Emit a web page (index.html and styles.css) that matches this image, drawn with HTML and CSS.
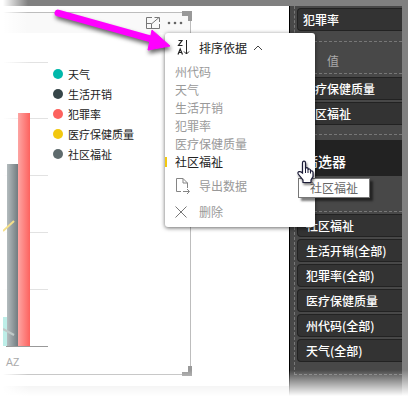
FILE: index.html
```html
<!DOCTYPE html>
<html lang="zh-CN">
<head>
<meta charset="utf-8">
<title>排序依据</title>
<link rel="stylesheet" href="styles.css">
</head>
<body>
<div class="frame">
  <main class="report">
    <section class="visual">
      <header class="visual-bar">
        <button class="icon-button" aria-label="焦点模式">
          <svg width="16" height="14" viewBox="0 0 16 14" fill="none" stroke="#777"><path d="M7 1.500H1.500v11h13V8M1.500 7.500h5v5M7 7.500l7-6M9.500 1.500h5V6"/></svg>
        </button>
        <button class="icon-button" aria-label="更多选项">
          <svg width="16" height="14" viewBox="0 0 16 14" fill="#666"><circle cx="2" cy="7" r="1.300"/><circle cx="8" cy="7" r="1.300"/><circle cx="14" cy="7" r="1.300"/></svg>
        </button>
      </header>
      <div class="visual-body">
        <svg class="plot" width="45" height="338" viewBox="0 0 45 338">
          <defs>
            <linearGradient id="gray"><stop stop-color="#b4bcbe"/><stop offset="1" stop-color="#727c80"/></linearGradient>
            <linearGradient id="red"><stop stop-color="#fda5a3"/><stop offset="1" stop-color="#fd625e"/></linearGradient>
            <linearGradient id="grid" gradientUnits="userSpaceOnUse" x1="0" y1="0" x2="28" y2="0"><stop stop-color="#fff"/><stop offset="1" stop-color="#e2e2e2"/></linearGradient>
          </defs>
          <path d="M0 29.500h45M0 85.500h45M0 142.500h45M0 199.500h45M0 256.500h45" stroke="url(#grid)"/>
          <path d="M0 284h4v29H0z" fill="#bdeee8"/>
          <path d="M4 131h11v182H4z" fill="url(#gray)"/>
          <path d="M15 80h12v233H15z" fill="url(#red)"/>
          <path d="M0 198l11-10" stroke="#f5e08a" stroke-width="2"/>
          <path d="M0 296l11 6" stroke="#bfc9c8" stroke-width="2"/>
          <path d="M3 313.500h42" stroke="#999"/>
          <text x="3" y="333" class="axis">AZ</text>
        </svg>
        <ul class="legend">
          <li><span class="dot teal"></span>天气</li>
          <li><span class="dot slate"></span>生活开销</li>
          <li><span class="dot coral"></span>犯罪率</li>
          <li><span class="dot gold"></span>医疗保健质量</li>
          <li><span class="dot steel"></span>社区福祉</li>
        </ul>
      </div>
      <span class="corner top"></span>
      <span class="corner bottom"></span>
    </section>
    <div class="tabs"></div>
  </main>
  <aside class="fields">
    <div class="well first"><button class="pill">犯罪率</button></div>
    <div class="well">
      <h3>值</h3>
      <div class="slots"><button class="pill">医疗保健质量</button><button class="pill">社区福祉</button></div>
    </div>
    <h2>筛选器</h2>
    <div class="band"></div>
    <div class="well filters">
      <button class="pill">社区福祉</button>
      <button class="pill">生活开销(全部)</button>
      <button class="pill">犯罪率(全部)</button>
      <button class="pill">医疗保健质量</button>
      <button class="pill">州代码(全部)</button>
      <button class="pill">天气(全部)</button>
    </div>
  </aside>
</div>
<div class="fade-left"></div>
<div class="fade-bottom"></div>

<div class="menu">
  <button class="row head">
    <svg width="16" height="18" viewBox="0 0 16 18" fill="none" stroke="#222"><path d="M1.500 1.500H5L1.500 6.500H5.500M1 15.500l2.200-5.500L5.500 15.500M2 13.500h3" stroke-width="1.200"/><path d="M9.500 1v14M7 12.500l2.500 2.500 2.500-2.500"/></svg>
    <span>排序依据</span>
    <svg width="10" height="6" viewBox="0 0 10 6" fill="none" stroke="#444"><path d="M1 5l4-4 4 4"/></svg>
  </button>
  <button class="item">州代码</button>
  <button class="item">天气</button>
  <button class="item">生活开销</button>
  <button class="item">犯罪率</button>
  <button class="item">医疗保健质量</button>
  <button class="item selected">社区福祉</button>
  <button class="row">
    <svg width="16" height="18" viewBox="0 0 16 18" fill="none" stroke="#858585"><path d="M6 14.500H1.500v-13H8L12.500 6v5M8 1.500V6h4.500M8 14.500h6M12 12l2.500 2.500L12 17"/></svg>
    <span>导出数据</span>
  </button>
  <button class="row">
    <svg width="16" height="18" viewBox="0 0 16 18" fill="none" stroke="#777"><path d="M0.500 3.500l11 11M11.500 3.500l-11 11"/></svg>
    <span>删除</span>
  </button>
</div>

<svg class="arrow" width="130" height="50" viewBox="0 0 130 50">
  <path d="M7 5L100 31" stroke="#f0f" stroke-width="7" stroke-linecap="round"/>
  <path d="M101 22L119 38 97 42z" fill="#f0f" stroke="#f0f"/>
</svg>
<div class="tooltip" role="tooltip">社区福祉</div>
<svg class="hand" width="18" height="24" viewBox="0 0 18 24">
  <path d="M5.500 13V3q0-1.800 1.500-1.800T8.500 3v6q0-1.300 1.300-1.300T11 9v1q.2-1.200 1.400-1T13.500 10.500v.8q2-1 2.500 1v4.200l-2 3.500v2.500H6V20L1.200 14q-.8-2 .8-2.300T5.500 13z" fill="#fff" stroke="#1c1c38" stroke-width="1.200"/>
  <path d="M8.500 9v4M11 10v3M13.500 11v2.500" stroke="#1c1c38"/>
</svg>
</body>
</html>
```
FILE: styles.css
```css
* { box-sizing: border-box; }
html, body { height: 100%; }
body {
  margin: 0;
  overflow: hidden;
  position: relative;
  background: #808080;
  font: 12px/18px "Noto Sans CJK SC", sans-serif;
  color: #222;
}
button { font: inherit; color: inherit; border: 0; background: none; padding: 0; margin: 0; text-align: left; }
h2, h3, ul { margin: 0; padding: 0; list-style: none; font-weight: 400; }
svg { display: block; flex: none; }

.frame { display: flex; height: 100%; padding: 6px 6px 0 0; }
.report { flex: 1; min-width: 0; display: flex; flex-direction: column; padding-top: 6px; background: #fff; }
.visual { position: relative; width: 66%; flex: 1; border: 1px solid #bdbdbd; border-left: 0; }
.visual-bar { display: flex; justify-content: flex-end; align-items: center; gap: 6px; height: 20px; padding-right: 7px; background: #f9f9f9; }
.visual-body { position: relative; z-index: 1; display: flex; gap: 5px; padding-left: 3px; }
.legend { padding-top: 31px; font-size: 11px; line-height: 20px; white-space: nowrap; }
.legend li { display: flex; align-items: center; gap: 5px; }
.dot { width: 10px; height: 10px; border-radius: 50%; }
.teal { background: #01b8aa; }
.slate { background: #374649; }
.coral { background: #fd625e; }
.gold { background: #f2c80f; }
.steel { background: #5f6b6d; }
.axis { font: 11px "Open Sans", sans-serif; fill: #aaa; }
.corner { position: absolute; right: -2px; width: 10px; height: 10px; border: solid #999; }
.corner.top { top: -2px; border-width: 5px 4px 0 0; }
.corner.bottom { bottom: -2px; border-width: 0 4px 4px 0; }
.tabs { height: 15px; margin-top: 11px; background: #e4e4e4; }

.fields { width: 113px; overflow: hidden; padding-left: 4px; border-left: 1px solid #000; background: #484848; color: #fff; white-space: nowrap; }
.well { border: 1px dashed #777; border-width: 0 0 1px 1px; padding: 2px 0 9px 2px; }
.well + .well { border-left: 0; padding-left: 3px; }
.pill { display: block; width: 100%; height: 23px; margin-bottom: 2px; padding-left: 5px; border: 1px solid #222; border-right: 0; border-radius: 4px 0 0 4px; background: #333; line-height: 18px; font-weight: 500; }
.fields .first { padding-bottom: 8px; }
.fields h3 { height: 31px; padding: 10px 0 0 30px; font-size: 12px; color: #aaa; }
.slots { margin-left: -3px; padding: 3px 0 0 3px; border-top: 1px dashed #777; }
.fields .well:nth-child(2) { padding-top: 0; padding-bottom: 7px; }
.fields h2 { height: 36px; margin: 5px 0 0 -4px; padding: 10px 0 0 14px; background: #222; font-size: 14px; line-height: 22px; font-weight: 500; }
.band { height: 36px; border-bottom: 1px dashed #777; }
.filters { padding-bottom: 10px; }
.filters .pill { padding-left: 8px; }

.fade-left { position: absolute; inset: 0 auto 0 0; width: 28px; background: linear-gradient(90deg, #fff 3px, transparent); }
.fade-bottom { position: absolute; z-index: 1; inset: auto 0 0 0; height: 31px; background: linear-gradient(transparent, #fff 26px); }

.menu { position: absolute; z-index: 2; left: 165px; top: 33px; width: 150px; padding: 3px 0 2px; border-radius: 3px; background: #fff; box-shadow: 0 1px 4px rgba(0, 0, 0, .6); color: #999; }
.row { display: flex; align-items: center; gap: 8px; width: 100%; height: 26px; padding-left: 10px; }
.row.head { height: 24px; margin-bottom: 3px; gap: 6px; padding-left: 12px; color: #222; }
.item { display: block; width: 100%; height: 18px; padding-left: 10px; }
.item.selected { margin-bottom: 2px; color: #222; background: linear-gradient(#f2c80f, #f2c80f) 0 4px / 2px 10px no-repeat; }
.arrow { position: absolute; z-index: 3; left: 51px; top: 8px; filter: drop-shadow(1px 3px 2px rgba(0, 0, 0, .6)); }
.tooltip { position: absolute; z-index: 3; left: 298px; top: 178px; padding: 0 11px; border: 1px solid #777; background: #fff; color: #666; box-shadow: 3px 3px 2px rgba(0, 0, 0, .5); }
.hand { position: absolute; z-index: 4; left: 297px; top: 160px; filter: drop-shadow(1px 2px 1px rgba(0, 0, 0, .5)); }
```
